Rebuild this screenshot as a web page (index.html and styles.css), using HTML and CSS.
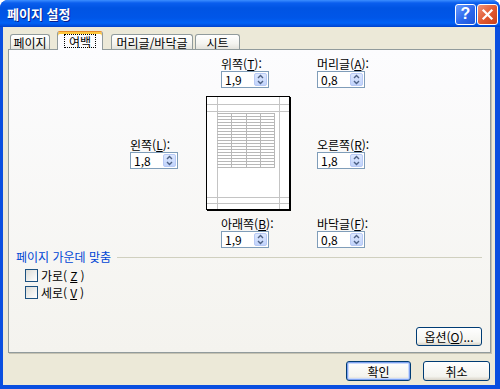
FILE: index.html
```html
<!DOCTYPE html>
<html lang="ko">
<head>
  <meta charset="UTF-8" />
  <title>페이지 설정</title>
  <link rel="stylesheet" href="styles.css">
</head>
<body>
  <div class="window">
    <div class="titlebar">
      <span class="title">페이지 설정</span>
      <div class="caption-btns">
        <span class="cbtn help">?</span>
        <span class="cbtn close">
          <svg width="13" height="13" viewBox="0 0 13 13"><path d="M2.5 2.5 L10.5 10.5 M10.5 2.5 L2.5 10.5" stroke="#fff" stroke-width="2.2" stroke-linecap="square"/></svg>
        </span>
      </div>
    </div>

    <div class="client">
      <div class="tabs">
        <span class="tab t-page">페이지</span>
        <span class="tab t-margin active"><span class="focus">여백</span></span>
        <span class="tab t-header">머리글/바닥글</span>
        <span class="tab t-sheet">시트</span>
      </div>

      <div class="panel">
        <div class="margins">
          <div class="field top">
            <div class="label">위쪽(<u>T</u>):</div>
            <div class="spin"><span>1,9</span><span class="spin-btn"><svg width="11" height="13" viewBox="0 0 11 13"><path d="M3 5 L5.5 2.5 L8 5 M3 8 L5.5 10.5 L8 8" fill="none" stroke="#4D6185" stroke-width="1.4"/></svg></span></div>
          </div>
          <div class="field right">
            <div class="label">머리글(<u>A</u>):</div>
            <div class="spin"><span>0,8</span><span class="spin-btn"><svg width="11" height="13" viewBox="0 0 11 13"><path d="M3 5 L5.5 2.5 L8 5 M3 8 L5.5 10.5 L8 8" fill="none" stroke="#4D6185" stroke-width="1.4"/></svg></span></div>
          </div>

          <div class="field left mid">
            <div class="label">왼쪽(<u>L</u>):</div>
            <div class="spin"><span>1,8</span><span class="spin-btn"><svg width="11" height="13" viewBox="0 0 11 13"><path d="M3 5 L5.5 2.5 L8 5 M3 8 L5.5 10.5 L8 8" fill="none" stroke="#4D6185" stroke-width="1.4"/></svg></span></div>
          </div>
          <div class="preview">
            <svg width="85" height="115" viewBox="0 0 85 115">
              <rect x="0.5" y="0.5" width="83" height="113" fill="#fff" stroke="#000"/>
              <path d="M84.5 1 V115 M1 114.5 H85" stroke="#000"/>
              <path d="M11.5 1 V113 M73.5 1 V113 M1 8.5 H83 M1 15.5 H83 M1 101.5 H83 M1 107.5 H83" stroke="#C4C4C4"/>
              <path d="M25.5 17 V72 M40.5 17 V72 M54.5 17 V72 M68.5 17 V72
                       M11 17.5 H69 M11 20.5 H69 M11 23.5 H69 M11 26.5 H69 M11 29.5 H69
                       M11 32.5 H69 M11 35.5 H69 M11 38.5 H69 M11 41.5 H69 M11 44.5 H69
                       M11 47.5 H69 M11 50.5 H69 M11 53.5 H69 M11 56.5 H69 M11 59.5 H69
                       M11 62.5 H69 M11 65.5 H69 M11 68.5 H69 M11 71.5 H69" stroke="#B8B8B8"/>
            </svg>
          </div>
          <div class="field right mid">
            <div class="label">오른쪽(<u>R</u>):</div>
            <div class="spin"><span>1,8</span><span class="spin-btn"><svg width="11" height="13" viewBox="0 0 11 13"><path d="M3 5 L5.5 2.5 L8 5 M3 8 L5.5 10.5 L8 8" fill="none" stroke="#4D6185" stroke-width="1.4"/></svg></span></div>
          </div>

          <div class="field top bottom">
            <div class="label">아래쪽(<u>B</u>):</div>
            <div class="spin"><span>1,9</span><span class="spin-btn"><svg width="11" height="13" viewBox="0 0 11 13"><path d="M3 5 L5.5 2.5 L8 5 M3 8 L5.5 10.5 L8 8" fill="none" stroke="#4D6185" stroke-width="1.4"/></svg></span></div>
          </div>
          <div class="field right">
            <div class="label">바닥글(<u>F</u>):</div>
            <div class="spin"><span>0,8</span><span class="spin-btn"><svg width="11" height="13" viewBox="0 0 11 13"><path d="M3 5 L5.5 2.5 L8 5 M3 8 L5.5 10.5 L8 8" fill="none" stroke="#4D6185" stroke-width="1.4"/></svg></span></div>
          </div>
        </div>

        <div class="group-title">페이지 가운데 맞춤</div>
        <label class="check"><span class="box"></span>가로(<u>Z</u>)</label>
        <label class="check"><span class="box"></span>세로(<u>V</u>)</label>

        <div class="panel-foot">
          <button class="btn options">옵션(<u>O</u>)...</button>
        </div>
      </div>

      <div class="actions">
        <button class="btn default">확인</button>
        <button class="btn cancel">취소</button>
      </div>
    </div>
  </div>
</body>
</html>
```

FILE: styles.css
```css
html, body {
  margin: 0;
  padding: 0;
  background: #fff;
  font-family: "Noto Sans CJK KR", "Noto Sans", sans-serif;
  font-size: 12px;
  color: #000;
}
.window {
  width: 500px;
  height: 389px;
  display: flex;
  flex-direction: column;
  background: #0A4FE0;
  border-radius: 8px 8px 0 0;
  overflow: hidden;
}
.titlebar {
  height: 27px;
  flex: none;
  display: flex;
  align-items: center;
  justify-content: space-between;
  padding-left: 7px;
  background: linear-gradient(to bottom, #3C8EFF 0px, #0A5EEE 3px, #0054E3 8px, #0056E8 18px, #0062F6 23px, #004BD9 26px, #0040C8 27px);
}
.title {
  color: #fff;
  font-weight: bold;
  font-size: 13px;
  text-shadow: 1px 1px 0 #0A1F8C;
  line-height: 15px;
}
.caption-btns {
  display: flex;
  gap: 1px;
  margin-right: 2px;
  margin-top: 1px;
}
.cbtn {
  width: 21px;
  height: 21px;
  box-sizing: border-box;
  border: 1px solid #fff;
  border-radius: 3px;
  display: flex;
  align-items: center;
  justify-content: center;
}
.help {
  background: linear-gradient(135deg, #6A9BFF, #2B67EC 55%, #1E56D8);
  color: #fff;
  font-family: "Liberation Sans", sans-serif;
  font-weight: bold;
  font-size: 16px;
  line-height: 1;
}
.close {
  background: linear-gradient(135deg, #F0937A, #E0572E 55%, #C8421B);
}
.client {
  flex: 1;
  margin: 0 5px 4px 3px;
  background: #ECE9D8;
  padding: 4px 4px 0 5px;
  display: flex;
  flex-direction: column;
}
.tabs {
  height: 19px;
  margin-bottom: -1px;
  padding-left: 2px;
  display: flex;
  align-items: flex-end;
  position: relative;
  z-index: 1;
}
.tab {
  box-sizing: border-box;
  height: 15px;
  margin-bottom: 1px;
  border: 1px solid #919B9C;
  border-bottom: none;
  border-radius: 3px 3px 0 0;
  background: linear-gradient(to bottom, #FFFFFF, #F4F4F0 60%, #E4E3DC);
  display: flex;
  align-items: flex-start;
  justify-content: center;
  padding-top: 1px;
  line-height: 14px;
  white-space: nowrap;
}
.t-page { width: 40px; }
.t-margin { width: 46px; margin-left: 7px; }
.t-header { width: 82px; margin-left: 8px; }
.t-sheet { width: 45px; margin-left: 2px; }
.tab.active {
  height: 19px;
  margin-bottom: 0;
  background: #FCFCFE;
  border-top-color: #E68B2C;
  box-shadow: inset 0 2px 0 #FFC83C;
  padding-top: 3px;
}
.focus {
  display: inline-block;
  outline: 1px dotted #000;
  padding: 0 4px;
  height: 12px;
  line-height: 14px;
}
.panel {
  height: 304px;
  flex: none;
  box-sizing: border-box;
  border: 1px solid #919B9C;
  box-shadow: 1px 1px 0 #C5C2B2;
  background: linear-gradient(to bottom, #FCFCFE, #F4F3EE);
  padding: 7px 8px 6px 7px;
  display: flex;
  flex-direction: column;
}
.margins {
  display: grid;
  grid-template-columns: 76px 111px 48px;
  margin-left: 114px;
}
.field {
  display: flex;
  flex-direction: column;
}
.field.top { grid-column: 2; margin-left: 15px; width: 48px; }
.field.right { grid-column: 3; }
.field.left { grid-column: 1; }
.field.mid { align-self: center; margin-top: 2px; }
.label {
  line-height: 14px;
  white-space: nowrap;
}
.spin {
  width: 48px;
  height: 17px;
  box-sizing: border-box;
  border: 1px solid #7F9DB9;
  background: #fff;
  display: flex;
  align-items: center;
  justify-content: space-between;
  padding: 0 1px 0 3px;
  line-height: 14px;
}
.spin-btn {
  width: 13px;
  height: 13px;
  box-sizing: border-box;
  border: 1px solid #B7C9F5;
  border-radius: 2px;
  background: linear-gradient(to bottom, #DDE8FE, #C1D3FB);
  display: flex;
  align-items: center;
  justify-content: center;
}
.preview {
  grid-column: 2;
  margin: 8px 0 6px;
  height: 115px;
}
.preview svg {
  display: block;
}
.group-title {
  display: flex;
  align-items: center;
  color: #0046D5;
  line-height: 14px;
  margin-top: 2px;
  white-space: nowrap;
}
.group-title::after {
  content: "";
  flex: 1;
  height: 1px;
  background: #D0D0BF;
  margin-left: 6px;
}
.check {
  display: flex;
  align-items: center;
  gap: 3px;
  height: 17px;
  margin-left: 9px;
}
.check:first-of-type {
  margin-top: 3px;
}
.box {
  width: 13px;
  height: 13px;
  box-sizing: border-box;
  border: 1px solid #1C5180;
  background: linear-gradient(135deg, #DCDCD7, #FFFFFF);
}
.panel-foot {
  margin-top: auto;
  display: flex;
  justify-content: flex-end;
}
.btn {
  box-sizing: border-box;
  height: 19px;
  border: 1px solid #003C74;
  border-radius: 3px;
  background: linear-gradient(to bottom, #FFFFFF, #F3F3EE 80%, #D8D3C7);
  font-family: inherit;
  font-size: 12px;
  line-height: 15px;
  padding: 0;
  color: #000;
}
.options { width: 66px; }
.actions {
  margin-top: 8px;
  display: flex;
  justify-content: flex-end;
  gap: 12px;
  padding-right: 1px;
}
.actions .btn { height: 20px; }
.default {
  width: 65px;
  box-shadow: inset 0 0 0 1px #7FA2F0, inset 0 0 0 2px #CADAFB;
}
.cancel { width: 67px; }
```
